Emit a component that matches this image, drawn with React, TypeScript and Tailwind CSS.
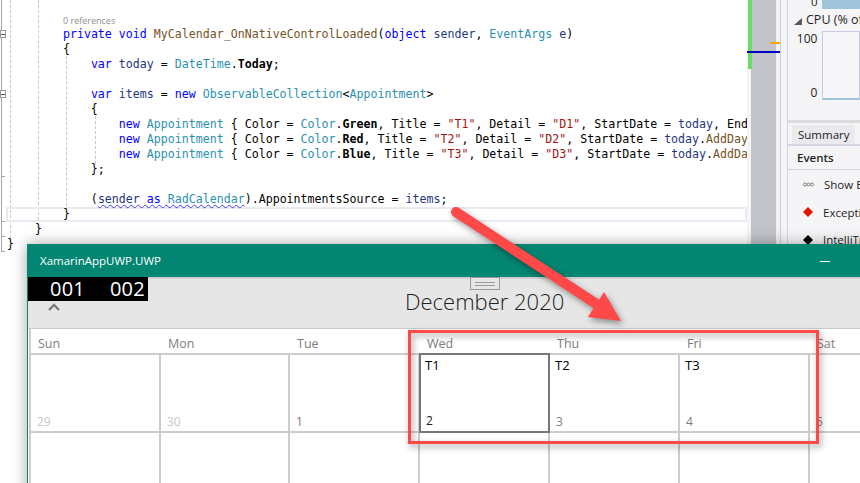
import React from "react";

const K = ({ children }: { children: React.ReactNode }) => <span className="text-[#0000ff]">{children}</span>;
const T = ({ children }: { children: React.ReactNode }) => <span className="text-[#2b91af]">{children}</span>;
const S = ({ children }: { children: React.ReactNode }) => <span className="text-[#a31515]">{children}</span>;
const L = ({ children }: { children: React.ReactNode }) => <span className="text-[#1f377f]">{children}</span>;
const M = ({ children }: { children: React.ReactNode }) => <span className="text-[#74531f]">{children}</span>;

const Line = ({ children }: { children?: React.ReactNode }) => (
  <div className="h-[15px] whitespace-pre text-black">{children ?? " "}</div>
);

const Appt = ({ color, t, d, rest }: { color: string; t: string; d: string; rest: React.ReactNode }) => (
  <Line>
    {"                "}
    <K>new</K> <T>Appointment</T> {"{ Color = "}
    <T>Color</T>.<b>{color}</b>, Title = <S>{`"${t}"`}</S>, Detail = <S>{`"${d}"`}</S>, StartDate = {rest}
  </Line>
);

const Fold = ({ top }: { top: string }) => (
  <div className={`absolute left-0 ${top} w-[6px] h-[8px] border border-[#9a9a9a] bg-white flex items-center justify-center`}>
    <div className="w-[4px] h-[1px] bg-[#555]" />
  </div>
);

function Editor() {
  return (
    <div className="relative w-[747px] h-[260px] shrink-0 bg-white overflow-hidden">
      <div className="absolute left-[1px] top-0 h-[251px] w-[1px] bg-[#a5a5a5]" />
      <div className="absolute left-[1px] top-[176px] h-[1px] w-[4px] bg-[#a5a5a5]" />
      <div className="absolute left-[1px] top-[221px] h-[1px] w-[4px] bg-[#a5a5a5]" />
      <div className="absolute left-[1px] top-[236px] h-[1px] w-[4px] bg-[#a5a5a5]" />
      <div className="absolute left-[1px] top-[251px] h-[1px] w-[4px] bg-[#a5a5a5]" />
      <Fold top="top-[30px]" />
      <Fold top="top-[90px]" />
      <div className="absolute left-[10px] top-0 h-[238px] border-l border-dashed border-[#c8c8c8]" />
      <div className="absolute left-[38px] top-0 h-[220px] border-l border-dashed border-[#c8c8c8]" />
      <div className="absolute left-[66px] top-[56px] h-[150px] border-l border-dashed border-[#c8c8c8]" />
      <div className="absolute left-[95px] top-[116px] h-[48px] border-l border-dashed border-[#c8c8c8]" />
      <div className="absolute left-[6px] top-[207px] w-[741px] h-[15px] border-2 border-[#eaeaf2]" />
      <div className="relative pl-[7px] pt-[15px] font-['DejaVu_Sans_Mono',monospace] text-[11.62px] leading-[15px]">
        <div className="h-[12px] pl-[56px] font-['Open_Sans',sans-serif] text-[9px] leading-[12px] text-[#8f8f8f]">0 references</div>
        <Line>
          {"        "}
          <K>private</K> <K>void</K> <M>MyCalendar_OnNativeControlLoaded</M>(<K>object</K> <L>sender</L>, <T>EventArgs</T> <L>e</L>)
        </Line>
        <Line>{"        {"}</Line>
        <Line>
          {"            "}
          <K>var</K> <L>today</L> = <T>DateTime</T>.<b>Today</b>;
        </Line>
        <Line />
        <Line>
          {"            "}
          <K>var</K> <L>items</L> = <K>new</K> <T>ObservableCollection</T>{"<"}
          <T>Appointment</T>{">"}
        </Line>
        <Line>{"            {"}</Line>
        <Appt color="Green" t="T1" d="D1" rest={<><L>today</L>, EndDate = <L>today</L></>} />
        <Appt color="Red" t="T2" d="D2" rest={<><L>today</L>.<M>AddDays</M>(1)</>} />
        <Appt color="Blue" t="T3" d="D3" rest={<><L>today</L>.<M>AddDays</M>(2)</>} />
        <Line>{"            };"}</Line>
        <Line />
        <Line>
          {"            ("}
          <span className="underline decoration-wavy decoration-[#3c3cf0] decoration-1 underline-offset-1">
            <L>sender</L> <K>as</K> <T>RadCalendar</T>
          </span>
          ).AppointmentsSource = <L>items</L>;
        </Line>
        <Line>{"        }"}</Line>
        <Line>{"    }"}</Line>
        <Line>{"}"}</Line>
      </div>
    </div>
  );
}

function Scroll() {
  return (
    <div className="relative w-[33px] h-[260px] shrink-0 bg-[#f1f1f1] flex">
      <div className="w-[4px] shrink-0 bg-[#f5f5f5]" />
      <div className="w-[25px] shrink-0 bg-[#c2c3c9]" />
      <div className="absolute left-[1px] top-0 w-[4px] h-[69px] bg-[#6bdc66]" />
      <div className="absolute left-[23px] top-[42px] w-[10px] h-[2px] bg-[#ffa500]" />
      <div className="absolute left-0 top-[51px] w-[33px] h-[2px] bg-[#0000c0]" />
    </div>
  );
}

function EventRow({ icon, label }: { icon: React.ReactNode; label: string }) {
  return (
    <div className="h-[27.5px] flex items-center pl-[15px] gap-[10px]">
      <div className="w-[12px] flex justify-center">{icon}</div>
      <span className="whitespace-nowrap">{label}</span>
    </div>
  );
}

function Side() {
  return (
    <div className="w-[80px] h-[260px] shrink-0 overflow-hidden bg-[#f5f5f7] border-l border-[#cfd0dc] pl-[6px] font-['Open_Sans',sans-serif] text-[11.5px] text-[#1e1e1e]">
      <div className="border-l border-[#d4d5e0] h-full">
        <div className="h-[120px] pl-[6px]">
          <div className="flex h-[9px] items-start">
            <span className="w-[26px] text-right pr-[1px] -mt-[7px]">0</span>
            <div className="ml-[4px] w-[40px] h-[9px] bg-[#a0c4dc]" />
          </div>
          <div className="flex items-center h-[21px] mt-[1px] gap-[4px] whitespace-nowrap text-[12.5px]">
            <svg width="8" height="8" viewBox="0 0 8 8" className="shrink-0"><path d="M8 1V8H0Z" fill="#595959" /></svg>
            <span>CPU (% of</span>
          </div>
          <div className="flex">
            <div className="w-[26px] h-[69px] flex flex-col justify-between items-end pr-[1px] text-[12px]">
              <span className="leading-[16px]">100</span>
              <span className="leading-[16px] -mb-[1px] ">0</span>
            </div>
            <div className="ml-[4px] w-[40px] h-[69px] border border-[#c8cbe0] border-b-2 border-b-[#a0c4dc] bg-[#f7f7fa]" />
          </div>
        </div>
        <div className="h-[3px] bg-[#dcdcdc]" />
        <div className="h-[23px] flex items-end border-b-2 border-[#d4d5e0] pl-[4px]">
          <div className="bg-[#e9e9ee] h-[19px] w-[63px] pl-[6px] leading-[19px]">Summary</div>
        </div>
        <div className="h-[24px] flex items-center font-semibold pl-[9px] border-b border-[#d4d5e0] mb-[1px]">Events</div>
        <EventRow
          icon={
            <svg width="11" height="5" viewBox="0 0 11 5">
              <circle cx="2" cy="2.5" r="1.5" fill="none" stroke="#808080" />
              <circle cx="5.5" cy="2.5" r="1.5" fill="none" stroke="#808080" />
              <circle cx="9" cy="2.5" r="1.5" fill="none" stroke="#808080" />
            </svg>
          }
          label="Show Events"
        />
        <EventRow icon={<svg width="10" height="10" viewBox="0 0 10 10"><path d="M5 0L10 5L5 10L0 5Z" fill="#e51400" /></svg>} label="Exceptions" />
        <EventRow icon={<svg width="10" height="10" viewBox="0 0 10 10"><path d="M5 0L10 5L5 10L0 5Z" fill="#000" /></svg>} label="IntelliTrace" />
      </div>
    </div>
  );
}

const cols = ["Sun", "Mon", "Tue", "Wed", "Thu", "Fri", "Sat"];
const dates = [
  { n: "29", dim: true },
  { n: "30", dim: true },
  { n: "1" },
  { n: "2", t: "T1", sel: true },
  { n: "3", t: "T2" },
  { n: "4", t: "T3" },
  { n: "5" },
];

function AppWindow() {
  return (
    <div className="absolute left-[27px] top-[244px] w-[860px] h-[260px] border-l border-[#038672] bg-white shadow-[0_0_14px_rgba(0,0,0,0.35)] font-['Open_Sans',sans-serif]">
      <div className="h-[33px] bg-[#038672] flex items-center justify-between pl-[12px] pr-[57px] text-white text-[11.5px]">
        <span>XamarinAppUWP.UWP</span>
        <div className="w-[10px] h-[1px] bg-white mt-[1px]" />
      </div>
      <div className="relative h-[52px] bg-[#e6e6e6] border-t-2 border-t-[#cfcfcf] border-b border-b-[#cccccc] flex justify-center">
        <div className="absolute left-0 -top-[2px] w-[120px] h-[24px] bg-black text-white flex items-center pl-[22px] gap-[25px] font-medium text-[20px] leading-none tracking-[0.2px]">
          <span>001</span>
          <span>002</span>
        </div>
        <svg className="absolute left-[20px] top-[24px]" width="12" height="8" viewBox="0 0 12 8">
          <path d="M1 7L6 2L11 7" fill="none" stroke="#7a7a7a" strokeWidth="2.4" />
        </svg>
        <div className="absolute left-[442px] -top-[2px] w-[30px] h-[13px] border border-[#9a9a9a] bg-[#e6e6e6] flex flex-col items-center justify-center gap-[2px]">
          <div className="w-[20px] h-[1px] bg-[#9a9a9a]" />
          <div className="w-[20px] h-[1px] bg-[#9a9a9a]" />
        </div>
        <div className="absolute left-[377px] top-[7px] font-light text-[22px] leading-[30px] text-[#222] whitespace-nowrap">December 2020</div>
      </div>
      <div className="ml-[1px] border-l-2 border-[#cccccc]">
        <div className="grid grid-cols-[130px_129px_130px_130px_130px_130px_130px] h-[24px] border-b-2 border-[#cccccc] box-content">
          {cols.map((c) => (
            <div key={c} className="pl-[7px] text-[12.5px] leading-[29px] text-[#7d7d7d]">{c}</div>
          ))}
        </div>
        <div className="grid grid-cols-[130px_129px_130px_130px_130px_130px_130px] h-[76px] border-b-2 border-[#cccccc] box-content">
          {dates.map((d) => (
            <div
              key={d.n}
              className={
                d.sel
                  ? "flex flex-col justify-between border-2 border-[#777777] -mt-[2px] -mb-[2px] -ml-[1px] pl-[5px] pb-[1px] text-[12px]"
                  : "flex flex-col justify-between border-r-2 border-[#cccccc] pl-[6px] text-[12px]"
              }
            >
              <span className="text-black leading-[20px] text-[13px] -ml-[1px]">{d.t ?? ""}</span>
              <span className={d.dim ? "text-[#c8c8c8]" : d.sel ? "text-[#222]" : "text-[#7d7d7d]"}>{d.n}</span>
            </div>
          ))}
        </div>
        <div className="grid grid-cols-[130px_129px_130px_130px_130px_130px_130px] h-[60px]">
          {cols.map((c) => (
            <div key={c} className="border-r-2 border-[#cccccc]" />
          ))}
        </div>
      </div>
    </div>
  );
}

export default function App() {
  return (
    <div className="relative w-[860px] h-[483px] overflow-hidden bg-white">
      <div className="flex">
        <Editor />
        <Scroll />
        <Side />
      </div>
      <AppWindow />
      <div className="absolute left-[408px] top-[330px] w-[411px] h-[114px] border-[3px] border-[#ff4848] drop-shadow-[2px_3px_3px_rgba(0,0,0,0.4)]" />
      <svg className="absolute left-0 top-0 drop-shadow-[2px_3px_3px_rgba(0,0,0,0.4)]" width="860" height="483" viewBox="0 0 860 483">
        <line x1="456" y1="212" x2="598" y2="305" stroke="#ff4848" strokeWidth="10" strokeLinecap="round" />
        <path d="M621 321L604 292L588 317Z" fill="#ff4848" />
      </svg>
    </div>
  );
}
